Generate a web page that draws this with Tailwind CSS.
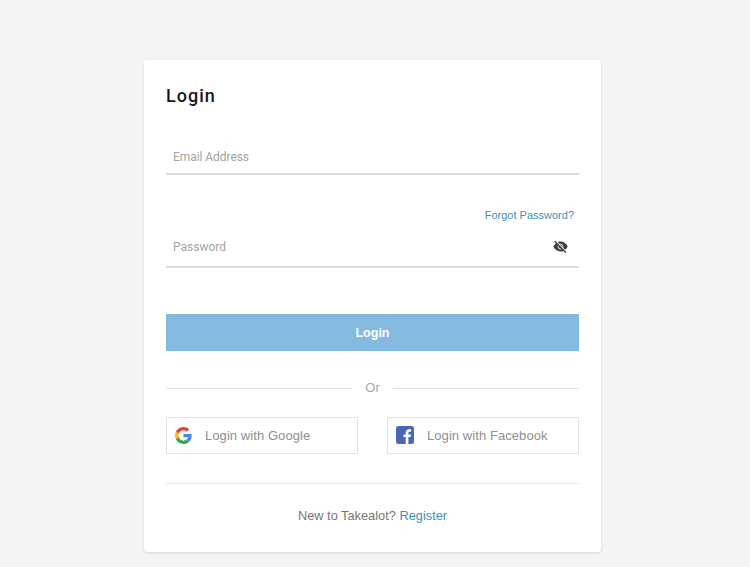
<!DOCTYPE html>
<html lang="en">

<head>
    <meta charset="UTF-8">
    <meta name="viewport" content="width=device-width, initial-scale=1.0">
    <title>Login</title>
    <script src="https://cdn.jsdelivr.net/npm/@tailwindcss/browser@4"></script>
</head>

<body class="bg-[#f4f4f4] font-['Liberation_Sans',Arial,sans-serif] h-[567px] overflow-hidden">
    <div class="w-[457px] h-[492px] mt-[60px] ml-[144px] px-[22px] bg-white rounded-[3px] shadow-[0_1px_3px_rgba(0,0,0,0.12)]">
        <h1 class="pt-[25px] h-[66px] text-[18px] leading-[22px] font-medium tracking-[1px] font-['Roboto',sans-serif] text-[#161616]">Login</h1>

        <!-- Email -->
        <div class="h-[49px] border-b-2 border-[#dcdcdc] pl-[7px] pt-[24px] text-[12px] leading-[14px] tracking-[-0.06px] font-['Roboto',sans-serif] text-[#a3a3a3]">Email Address</div>

        <!-- Password -->
        <div class="h-[34px] mt-[6px] pt-[27px] pr-[5px] text-right text-[11px] leading-[14px] text-[#3f8fb8] box-content"><a href="#">Forgot Password?</a></div>
        <div class="h-[34px] mt-[-8px] flex items-center justify-between border-b-2 border-[#dcdcdc] pb-[7px] pl-[7px] pr-[11px] text-[12px] font-['Roboto',sans-serif] text-[#a3a3a3]">
            <span>Password</span>
            <svg class="w-[15px] h-[15px]" viewBox="0 0 24 24" fill="#3a3a3a" stroke="#3a3a3a" stroke-width="0.8">
                <path d="M12 7c2.76 0 5 2.24 5 5 0 .65-.13 1.26-.36 1.83l2.92 2.92c1.51-1.26 2.7-2.89 3.43-4.75-1.73-4.39-6-7.5-11-7.5-1.4 0-2.74.25-3.98.7l2.16 2.16C10.74 7.13 11.35 7 12 7zM2 4.27l2.28 2.28.46.46C3.08 8.3 1.78 10.02 1 12c1.73 4.39 6 7.5 11 7.5 1.55 0 3.03-.3 4.38-.84l.42.42L19.73 22 21 20.73 3.27 3 2 4.27zM7.53 9.8l1.55 1.55c-.05.21-.08.43-.08.65 0 1.66 1.34 3 3 3 .22 0 .44-.03.65-.08l1.55 1.55c-.67.33-1.41.53-2.2.53-2.76 0-5-2.24-5-5 0-.79.2-1.53.53-2.2zm4.31-.78l3.15 3.15.02-.16c0-1.66-1.34-3-3-3l-.17.01z"/>
            </svg>
        </div>

        <button class="block w-full h-[37px] mt-[46px] pt-[2px] bg-[#84badf] text-white text-[12.5px] font-bold text-center">Login</button>

        <!-- Or divider -->
        <div class="flex items-center h-[16px] mt-[29px] text-[13px] text-[#a8a8a8]">
            <div class="flex-1 border-t border-[#e2e2e2]"></div>
            <span class="w-[41px] text-center">Or</span>
            <div class="flex-1 border-t border-[#e2e2e2]"></div>
        </div>

        <!-- Social buttons -->
        <div class="flex justify-between mt-[21px]">
            <a href="#" class="flex items-center w-[192px] h-[37px] border border-[#e2e2e2] pl-[8px] text-[13px] tracking-[0.07px] text-[#8f8f8f]">
                <svg class="w-[17px] h-[17px] mr-[13px]" viewBox="0 0 48 48">
                    <path fill="#EA4335" d="M24 9.5c3.54 0 6.71 1.22 9.21 3.6l6.85-6.85C35.9 2.38 30.47 0 24 0 14.62 0 6.51 5.38 2.56 13.22l7.98 6.19C12.43 13.72 17.74 9.5 24 9.5z"/>
                    <path fill="#4285F4" d="M46.98 24.55c0-1.57-.15-3.09-.38-4.55H24v9.02h12.94c-.58 2.96-2.26 5.48-4.78 7.18l7.73 6c4.51-4.18 7.09-10.36 7.09-17.65z"/>
                    <path fill="#FBBC05" d="M10.53 28.59c-.48-1.45-.76-2.99-.76-4.59s.27-3.14.76-4.59l-7.98-6.19C.92 16.46 0 20.12 0 24c0 3.88.92 7.54 2.56 10.78l7.97-6.19z"/>
                    <path fill="#34A853" d="M24 48c6.48 0 11.93-2.13 15.89-5.81l-7.73-6c-2.15 1.45-4.92 2.3-8.16 2.3-6.26 0-11.57-4.22-13.47-9.91l-7.98 6.19C6.51 42.62 14.62 48 24 48z"/>
                </svg>
                Login with Google
            </a>
            <a href="#" class="flex items-center w-[192px] h-[37px] border border-[#e2e2e2] pl-[8px] text-[13px] tracking-[0.07px] text-[#8f8f8f]">
                <svg class="w-[18px] h-[18px] mr-[13px] -translate-y-px" viewBox="0 0 18 18">
                    <rect width="18" height="18" rx="2.5" fill="#4a66b5"/>
                    <path fill="#fff" d="M12.4 18v-6.9h2.2l.35-2.6H12.4V6.9c0-.75.2-1.25 1.3-1.25h1.35V3.3c-.25-.03-1.05-.1-2-.1-2 0-3.35 1.2-3.35 3.45v1.85H7.5v2.6h2.2V18z"/>
                </svg>
                Login with Facebook
            </a>
        </div>

        <div class="mt-[29px] border-t border-[#e8e8e8] pt-[24px] text-center text-[12.8px] leading-[16px] text-[#777]">
            New to Takealot? <a href="#" class="text-[#3f8fb8]">Register</a>
        </div>
    </div>
</body>

</html>
